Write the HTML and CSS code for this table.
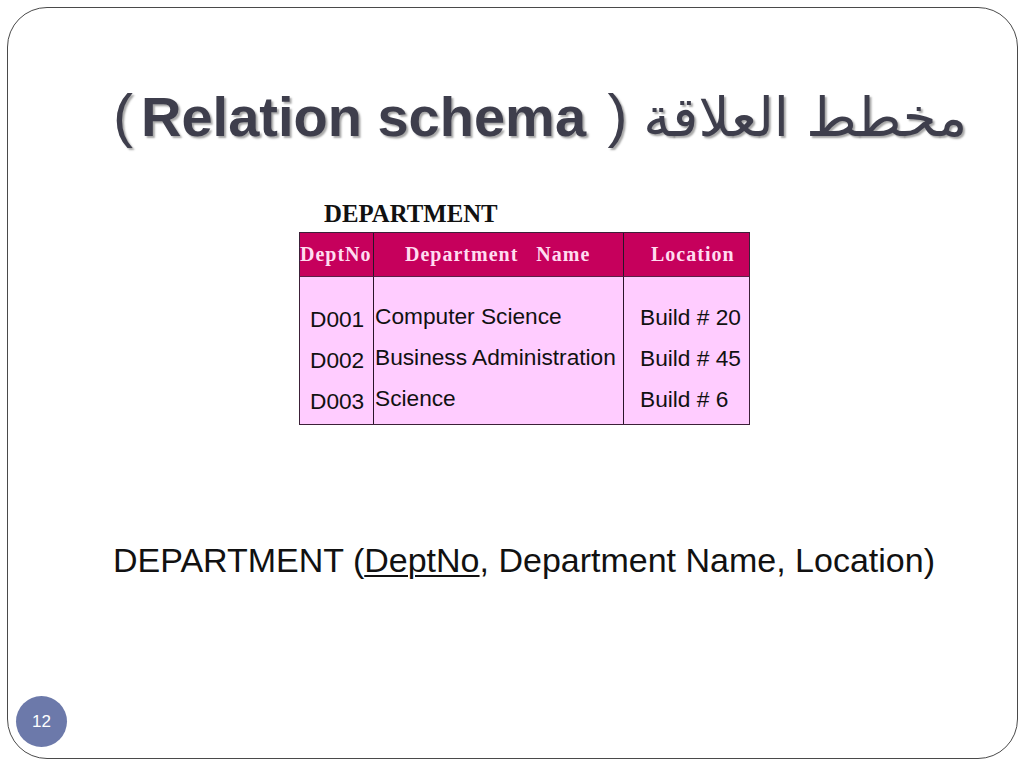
FILE: index.html
```html
<!DOCTYPE html>
<html lang="en">
<head>
<meta charset="utf-8">
<title>Relation schema</title>
<link rel="stylesheet" href="styles.css">
</head>
<body>
<div class="slide">
  <h1 class="title"><span class="paren open">(</span>Relation schema <span class="paren close">)</span> <span class="ar" lang="ar">مخطط العلاقة</span></h1>
  <div class="label">DEPARTMENT</div>
  <div class="table">
    <div class="th c1">DeptNo</div>
    <div class="th c2">Department&nbsp;&nbsp; Name</div>
    <div class="th c3">Location</div>
    <div class="td c1"><span>D001</span><span>D002</span><span>D003</span></div>
    <div class="td c2"><span>Computer Science</span><span>Business Administration</span><span>Science</span></div>
    <div class="td c3"><span>Build # 20</span><span>Build # 45</span><span>Build # 6</span></div>
  </div>
  <p class="schema">DEPARTMENT (<u>DeptNo</u>, Department Name, Location)</p>
  <div class="pagenum">12</div>
</div>
</body>
</html>
```
FILE: styles.css
```css
html, body {
  margin: 0;
  padding: 0;
  background: #ffffff;
}
body {
  width: 1024px;
  height: 768px;
  overflow: hidden;
}
.slide {
  box-sizing: border-box;
  margin: 7px 0 0 7px;
  width: 1011px;
  height: 752px;
  border: 1px solid #4a4a4a;
  border-radius: 40px;
  display: flex;
  flex-direction: column;
  align-items: flex-start;
}
.title {
  margin: 76px 0 0 105px;
  font-family: "Liberation Sans", Arial, sans-serif;
  font-weight: bold;
  font-size: 56px;
  line-height: 64px;
  height: 64px;
  color: #3e3e4c;
  text-shadow: 2px 2px 2px rgba(0, 0, 0, 0.35);
  white-space: nowrap;
  direction: ltr;
}
.title .paren {
  font-weight: normal;
  display: inline-block;
  font-size: 60px;
}
.title .open {
  margin-right: 8px;
}
.title .close {
  margin-left: 6px;
}
.title .ar {
  font-family: "DejaVu Sans", sans-serif;
  font-weight: normal;
  font-size: 54.5px;
}
.label {
  margin: 52px 0 0 316px;
  font-family: "Liberation Serif", "Times New Roman", serif;
  font-weight: bold;
  font-size: 24.8px;
  line-height: 28px;
  color: #111;
}
.table {
  margin: 4px 0 0 291px;
  display: grid;
  grid-template-columns: 74px 250px 125px;
  grid-template-rows: 44px 147px;
  border: 1px solid #3c2038;
  background: #ffccff;
}
.th {
  background: #c6005c;
  color: #ffdcf0;
  font-family: "Liberation Serif", "Times New Roman", serif;
  font-weight: bold;
  font-size: 20px;
  letter-spacing: 1px;
  display: flex;
  align-items: center;
  border-bottom: 1px solid #5a2048;
  white-space: nowrap;
}
.c1, .c2 {
  border-right: 1px solid #2a1428;
}
.th.c1 { padding-left: 0; }
.th.c2 { padding-left: 31px; }
.th.c3 { padding-left: 27px; }
.td {
  display: flex;
  flex-direction: column;
  font-family: "Liberation Sans", Arial, sans-serif;
  font-size: 22.7px;
  line-height: 41px;
  color: #111;
  white-space: nowrap;
}
.td.c1 { padding: 22px 0 0 10px; }
.td.c2 { padding: 19px 0 0 1px; }
.td.c3 { padding: 20px 0 0 16px; }
.schema {
  margin: 115px 0 0 105px;
  font-family: "Liberation Sans", Arial, sans-serif;
  font-size: 34px;
  line-height: 40px;
  color: #111;
  white-space: nowrap;
}
.schema u {
  text-decoration-thickness: 2px;
  text-underline-offset: 3px;
}
.pagenum {
  margin: auto 0 11px 8px;
  width: 51px;
  height: 51px;
  border-radius: 50%;
  background: #6c79aa;
  color: #ffffff;
  font-family: "Liberation Sans", Arial, sans-serif;
  font-size: 17px;
  display: flex;
  align-items: center;
  justify-content: center;
}
```
